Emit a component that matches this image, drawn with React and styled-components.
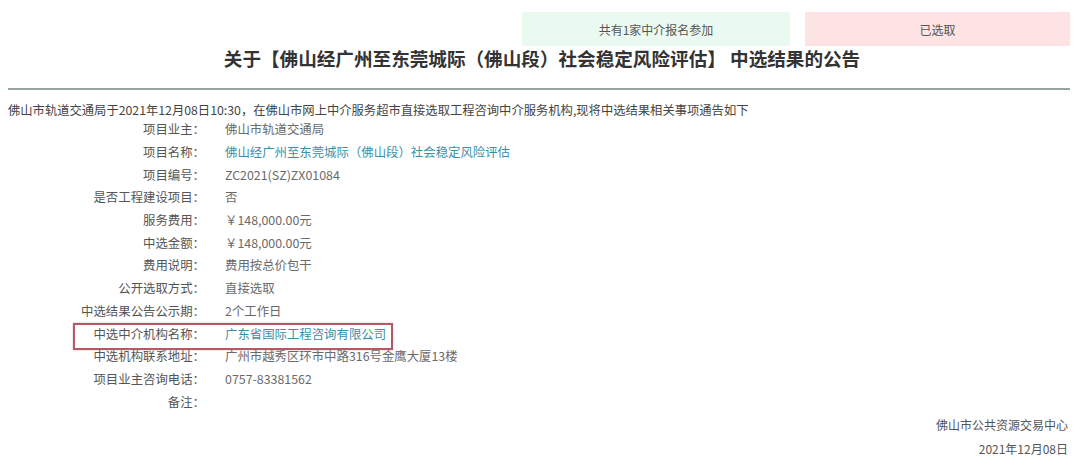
import React from "react";
import styled, { createGlobalStyle } from "styled-components";

const Global = createGlobalStyle`
  html, body { margin: 0; padding: 0; background: #ffffff; }
  body { font-family: "Noto Sans CJK SC", "Noto Sans", sans-serif; }
`;

const Page = styled.div`
  width: 1080px;
  height: 470px;
  box-sizing: border-box;
  padding: 12px 10px 0 8px;
  display: flex;
  flex-direction: column;
  overflow: hidden;
`;

const Tabs = styled.div`
  display: flex;
  justify-content: flex-end;
  gap: 15px;
`;

const Tab = styled.div`
  width: ${(p) => p.$w}px;
  height: 34px;
  display: flex;
  align-items: center;
  justify-content: center;
  font-size: 12px;
  color: #555;
  background: ${(p) => (p.$tone === "green" ? "#ebfaf1" : "#fde3e3")};
`;

const Title = styled.h1`
  margin: 0;
  font-size: 18.6px;
  line-height: 24px;
  font-weight: 700;
  color: #333;
  text-align: center;
  padding-left: 6px;
`;

const Rule = styled.hr`
  margin: 18px 0 0;
  border: 0;
  height: 2px;
  background: #97a4a2;
`;

const Intro = styled.p`
  margin: 12px 0 0;
  font-size: 12.3px;
  line-height: 16px;
  color: #444;
  white-space: nowrap;
`;

const Fields = styled.div`
  display: flex;
  flex-direction: column;
`;

const Row = styled.div`
  position: relative;
  display: grid;
  grid-template-columns: 197px 1fr;
  column-gap: 20px;
  height: 22.7px;
  align-items: center;
  font-size: 12.4px;
  white-space: nowrap;

  ${(p) =>
    p.$highlight &&
    `
    &::after {
      content: "";
      position: absolute;
      left: 65px;
      top: 1px;
      width: 316px;
      height: 23px;
      border: 2px solid #b45a66;
      box-shadow: 0 0 2px rgba(150, 60, 70, 0.35);
      pointer-events: none;
    }
  `}
`;

const Label = styled.span`
  text-align: right;
  color: #555;
`;

const Value = styled.span`
  color: ${(p) => (p.$link ? "#3a8fa8" : "#6a6a6a")};
`;

const Footer = styled.div`
  display: flex;
  flex-direction: column;
  align-items: flex-end;
  padding-right: 2px;
  font-size: 12px;
  line-height: 24px;
  color: #555;
`;

const fields = [
  ["项目业主：", "佛山市轨道交通局"],
  ["项目名称：", "佛山经广州至东莞城际（佛山段）社会稳定风险评估", true],
  ["项目编号：", "ZC2021(SZ)ZX01084"],
  ["是否工程建设项目：", "否"],
  ["服务费用：", "￥148,000.00元"],
  ["中选金额：", "￥148,000.00元"],
  ["费用说明：", "费用按总价包干"],
  ["公开选取方式：", "直接选取"],
  ["中选结果公告公示期：", "2个工作日"],
  ["中选中介机构名称：", "广东省国际工程咨询有限公司", true, true],
  ["中选机构联系地址：", "广州市越秀区环市中路316号金鹰大厦13楼"],
  ["项目业主咨询电话：", "0757-83381562"],
  ["备注：", ""],
];

export default function App() {
  return (
    <>
      <Global />
      <Page>
        <Tabs>
          <Tab $tone="green" $w={268}>共有1家中介报名参加</Tab>
          <Tab $tone="pink" $w={265}>已选取</Tab>
        </Tabs>
        <Title>关于【佛山经广州至东莞城际（佛山段）社会稳定风险评估】 中选结果的公告</Title>
        <Rule />
        <Intro>
          佛山市轨道交通局于2021年12月08日10:30，在佛山市网上中介服务超市直接选取工程咨询中介服务机构,现将中选结果相关事项通告如下
        </Intro>
        <Fields>
          {fields.map(([label, value, link, hl]) => (
            <Row key={label} $highlight={hl}>
              <Label>{label}</Label>
              <Value $link={link}>{value}</Value>
            </Row>
          ))}
        </Fields>
        <Footer>
          <span>佛山市公共资源交易中心</span>
          <span>2021年12月08日</span>
        </Footer>
      </Page>
    </>
  );
}
